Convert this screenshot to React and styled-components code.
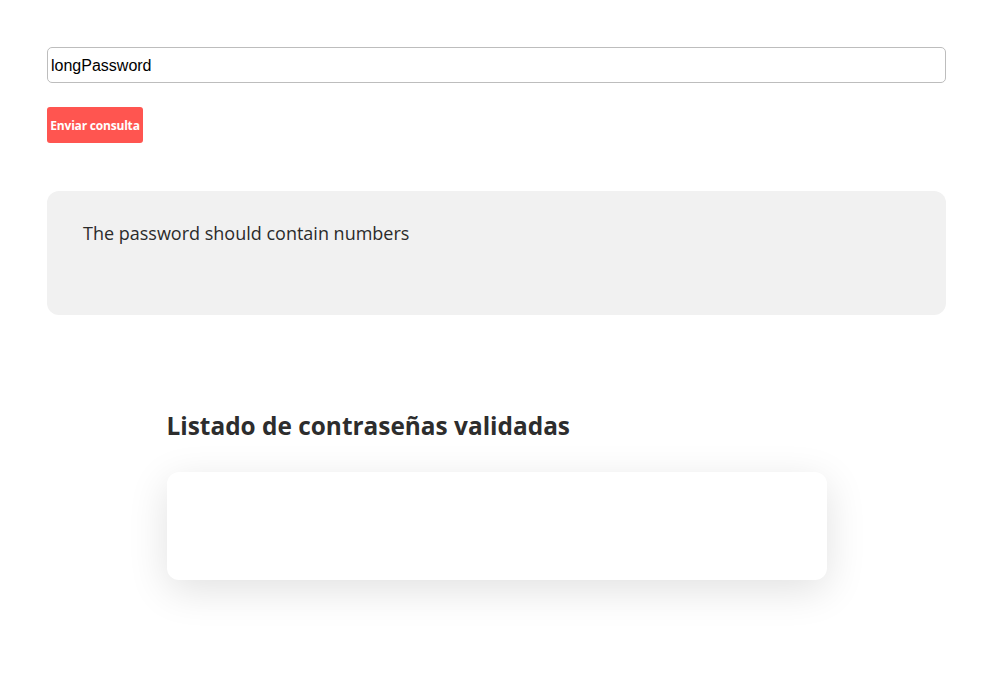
import React from "react";
import styled, { createGlobalStyle } from "styled-components";

const GlobalStyle = createGlobalStyle`
  body {
    margin: 0;
    background: #ffffff;
    font-family: "Trebuchet MS", "Open Sans", sans-serif;
  }
`;

const Page = styled.div`
  padding: 47px 45px 47px 47px;
`;

const Form = styled.form`
  display: flex;
  flex-direction: column;
  align-items: flex-start;
  gap: 24px;
`;

const PasswordInput = styled.input`
  box-sizing: border-box;
  width: 100%;
  height: 36px;
  margin: 0;
  padding: 1px 3px 0;
  border: 1px solid #bdbdbd;
  border-radius: 5px;
  font-family: "Liberation Sans", Arial, sans-serif;
  font-size: 16px;
  color: #000;
  outline: none;
`;

const SubmitButton = styled.button`
  width: 96px;
  height: 36px;
  padding: 0;
  border: none;
  border-radius: 3px;
  background: #ff5550;
  color: #fff;
  font-family: "Trebuchet MS", "Open Sans", sans-serif;
  font-weight: 700;
  font-size: 12px;
  letter-spacing: -0.2px;
  white-space: nowrap;
`;

const Message = styled.div`
  box-sizing: border-box;
  margin-top: 48px;
  height: 124px;
  padding: 28px 36px;
  border-radius: 12px;
  background: #f1f1f1;
  color: #2b2b2b;
  font-size: 18px;
  line-height: 28px;
`;

const ListSection = styled.section`
  width: 660px;
  margin: 87px auto 0;
  display: flex;
  flex-direction: column;
  gap: 22px;
`;

const Title = styled.h2`
  margin: 0;
  font-size: 24.4px;
  line-height: 48px;
  font-weight: 700;
  color: #2d2d2d;
`;

const ListCard = styled.div`
  height: 108px;
  border-radius: 12px;
  background: #fff;
  box-shadow: 0 10px 40px rgba(0, 0, 0, 0.12);
`;

export default function App() {
  return (
    <>
      <GlobalStyle />
      <Page>
        <Form onSubmit={(e) => e.preventDefault()}>
          <PasswordInput type="text" defaultValue="longPassword" />
          <SubmitButton type="submit">Enviar consulta</SubmitButton>
        </Form>
        <Message>The password should contain numbers</Message>
        <ListSection>
          <Title>Listado de contraseñas validadas</Title>
          <ListCard />
        </ListSection>
      </Page>
    </>
  );
}
